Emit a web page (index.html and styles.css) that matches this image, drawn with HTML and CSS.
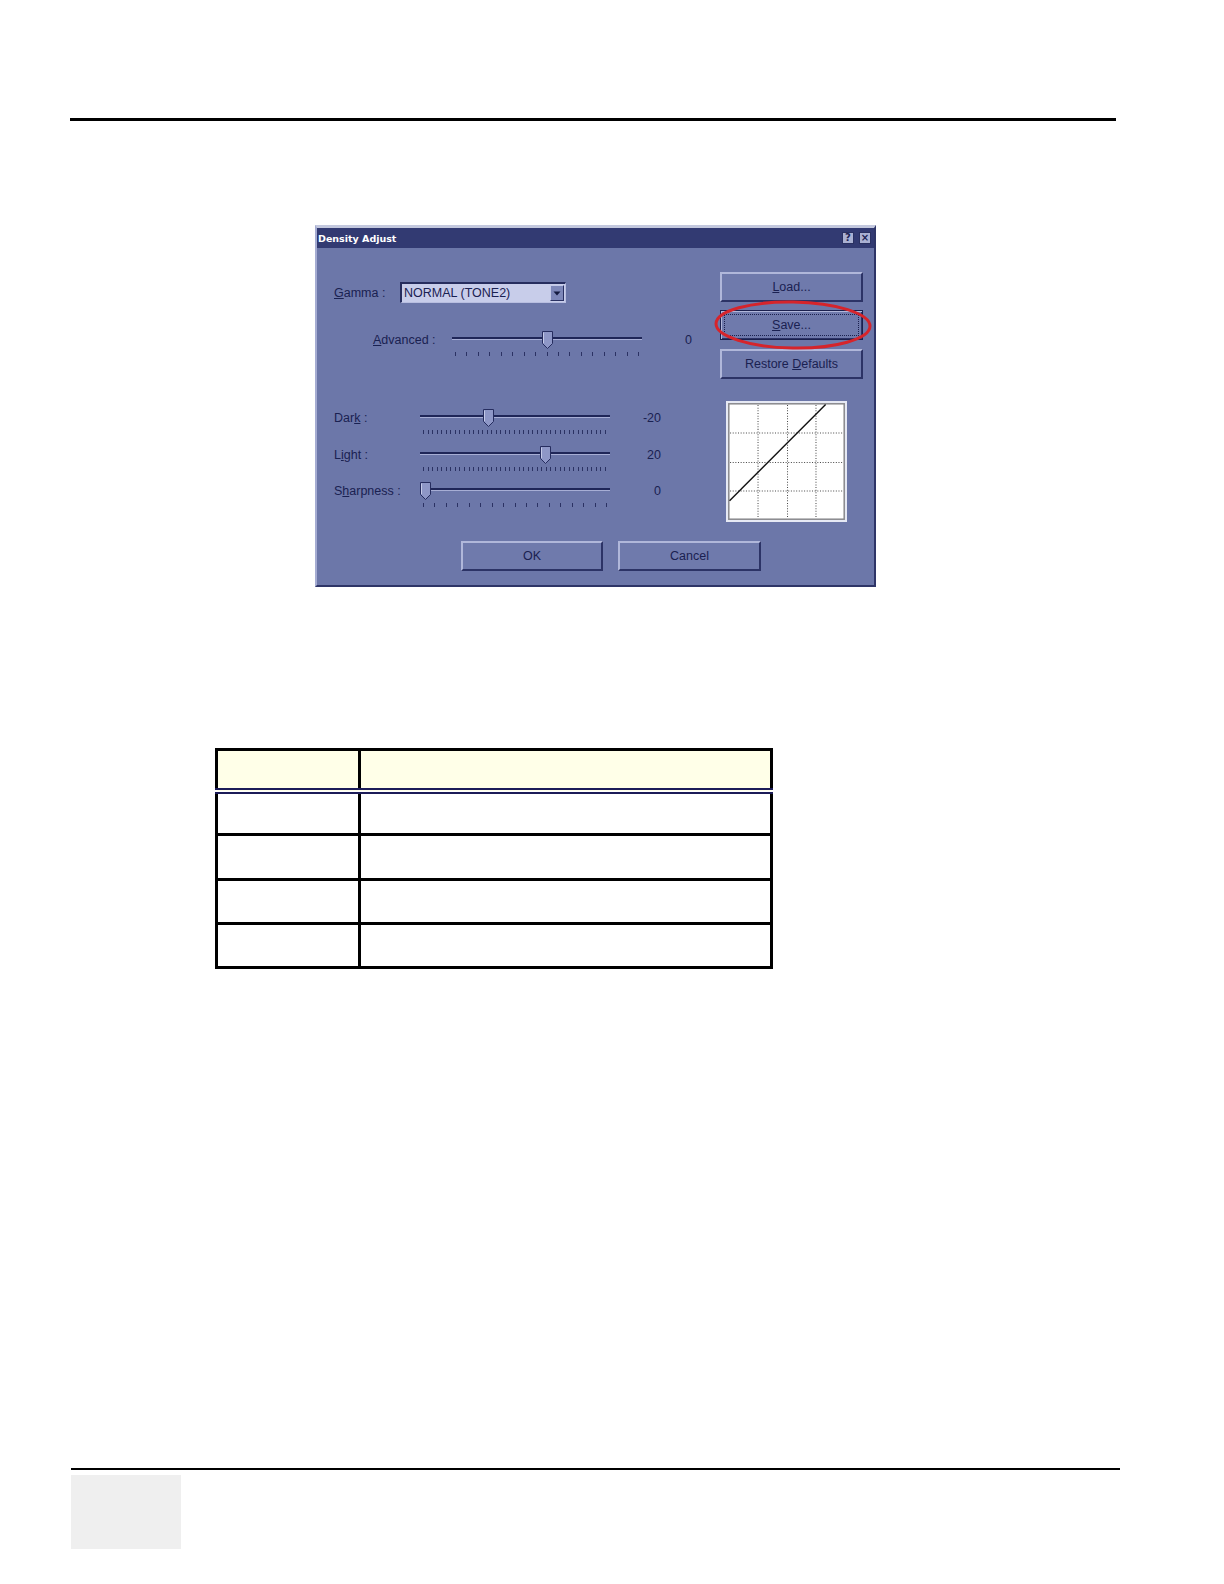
FILE: index.html
```html
<!DOCTYPE html>
<html lang="en">
<head>
<meta charset="utf-8">
<title>Density Adjust</title>
<link rel="stylesheet" href="styles.css">
</head>
<body>
<div class="page">
  <div class="rule-top"></div>

  <div class="dialog">
    <div class="titlebar">
      <span class="title">Density Adjust</span>
      <span class="tb-btns"><span class="tb-btn">?</span><span class="tb-btn">&#215;</span></span>
    </div>
    <div class="dlg-body">
      <div class="dlg-main">
        <div class="left-col">
          <div class="gamma-row">
            <span class="lbl lbl-gamma"><u>G</u>amma :</span>
            <div class="combo">
              <span class="combo-text">NORMAL (TONE2)</span>
              <span class="combo-arrow"><svg width="8" height="5" viewBox="0 0 8 5"><path d="M0.5 0.5 H7.5 L4 4.5 Z" fill="#141a40"/></svg></span>
            </div>
          </div>

          <div class="srow srow-adv">
            <span class="lbl"><u>A</u>dvanced :</span>
            <div class="slider" style="--pos:0.5">
              <div class="track"></div>
              <div class="ticks ticks-coarse"></div>
              <svg class="thumb" viewBox="0 0 11 18"><path d="M0.5 0.5 H10.5 V12.5 L5.5 17.5 L0.5 12.5 Z" fill="#8e97c7" stroke="#262d5f"/><path d="M1.5 1.5 V12" stroke="#c5cbe9"/></svg>
            </div>
            <span class="val val-adv">0</span>
          </div>

          <div class="srow srow-dark">
            <span class="lbl">Dar<u>k</u> :</span>
            <div class="slider" style="--pos:0.35">
              <div class="track"></div>
              <div class="ticks ticks-fine"></div>
              <svg class="thumb" viewBox="0 0 11 18"><path d="M0.5 0.5 H10.5 V12.5 L5.5 17.5 L0.5 12.5 Z" fill="#8e97c7" stroke="#262d5f"/><path d="M1.5 1.5 V12" stroke="#c5cbe9"/></svg>
            </div>
            <span class="val">-20</span>
          </div>

          <div class="srow srow-light">
            <span class="lbl">L<u>i</u>ght :</span>
            <div class="slider" style="--pos:0.67">
              <div class="track"></div>
              <div class="ticks ticks-fine"></div>
              <svg class="thumb" viewBox="0 0 11 18"><path d="M0.5 0.5 H10.5 V12.5 L5.5 17.5 L0.5 12.5 Z" fill="#8e97c7" stroke="#262d5f"/><path d="M1.5 1.5 V12" stroke="#c5cbe9"/></svg>
            </div>
            <span class="val">20</span>
          </div>

          <div class="srow srow-sharp">
            <span class="lbl">S<u>h</u>arpness :</span>
            <div class="slider" style="--pos:0">
              <div class="track"></div>
              <div class="ticks ticks-coarse"></div>
              <svg class="thumb" viewBox="0 0 11 18"><path d="M0.5 0.5 H10.5 V12.5 L5.5 17.5 L0.5 12.5 Z" fill="#8e97c7" stroke="#262d5f"/><path d="M1.5 1.5 V12" stroke="#c5cbe9"/></svg>
            </div>
            <span class="val">0</span>
          </div>
        </div>

        <div class="right-col">
          <div class="btn"><span><u>L</u>oad...</span></div>
          <div class="save-wrap">
            <div class="btn btn-default"><span class="focus"><span><u>S</u>ave...</span></span></div>
            <svg class="circle" width="166" height="56" viewBox="0 0 166 56"><ellipse cx="83" cy="25" rx="77" ry="23" transform="rotate(1 83 25)" fill="none" stroke="#d6242b" stroke-width="3"/></svg>
          </div>
          <div class="btn"><span>Restore <u>D</u>efaults</span></div>
          <div class="graph">
            <svg width="121" height="121" viewBox="0 0 119 119">
              <rect x="0" y="0" width="119" height="119" fill="#e6e9f4"/>
              <rect x="2" y="2" width="115" height="115" fill="#8a8a8e"/>
              <rect x="3.5" y="3.5" width="112" height="112" fill="#ffffff"/>
              <g stroke="#4a4a4a" stroke-width="1" stroke-dasharray="1 1.6">
                <line x1="31.5" y1="4" x2="31.5" y2="115"/>
                <line x1="60.5" y1="4" x2="60.5" y2="115"/>
                <line x1="88.5" y1="4" x2="88.5" y2="115"/>
                <line x1="4" y1="31.5" x2="115" y2="31.5"/>
                <line x1="4" y1="60.5" x2="115" y2="60.5"/>
                <line x1="4" y1="88.5" x2="115" y2="88.5"/>
              </g>
              <line x1="3.5" y1="98" x2="98" y2="3.5" stroke="#111" stroke-width="1.4"/>
            </svg>
          </div>
        </div>
      </div>
      <div class="dlg-foot">
        <div class="btn btn-ok"><span>OK</span></div>
        <div class="btn btn-cancel"><span>Cancel</span></div>
      </div>
    </div>
  </div>

  <table class="spec">
    <thead>
      <tr><th class="c1"></th><th class="c2"></th></tr>
    </thead>
    <tbody>
      <tr><td></td><td></td></tr>
      <tr><td></td><td></td></tr>
      <tr><td></td><td></td></tr>
      <tr><td></td><td></td></tr>
    </tbody>
  </table>

  <div class="page-foot">
    <div class="rule-bottom"></div>
    <div class="tab-box"></div>
  </div>
</div>
</body>
</html>
```

FILE: styles.css
```css
* { box-sizing: border-box; }
html, body { margin: 0; padding: 0; background: #ffffff; }
body { font-family: "Liberation Sans", Arial, sans-serif; }

.page { width: 1224px; min-height: 1584px; padding-top: 118px; overflow: hidden; }

.rule-top { margin-left: 70px; width: 1046px; height: 3px; background: #000; }

/* ---------- dialog ---------- */
.dialog {
  margin: 104px 0 0 315px;
  width: 561px;
  background: #6c77a9;
  border-top: 3px solid #c3c8de;
  border-left: 2px solid #a5acd2;
  border-right: 2px solid #2e3567;
  border-bottom: 2px solid #2e3567;
  color: #1a2151;
  font-size: 12.5px;
}
.titlebar {
  height: 20px;
  background: #323a72;
  display: flex;
  align-items: center;
  justify-content: space-between;
  padding: 0 3px 0 1px;
}
.title {
  font-family: "DejaVu Sans", Verdana, sans-serif;
  font-weight: bold;
  font-size: 9.5px;
  color: #ffffff;
}
.tb-btns { display: flex; gap: 5px; }
.tb-btn {
  width: 12px; height: 12px;
  background: #aab1d3;
  border: 1px solid #2a3162;
  font-family: "DejaVu Sans", sans-serif;
  font-weight: bold;
  font-size: 10px;
  line-height: 10px;
  text-align: center;
  color: #1c2354;
}

.dlg-body { padding-bottom: 14px; }
.dlg-main { display: flex; align-items: flex-start; }

.left-col { width: 403px; padding: 34px 0 0 17px; }

.lbl { line-height: 16px; margin-top: 1px; white-space: nowrap; }
u { text-decoration: underline; text-underline-offset: 1px; }

.gamma-row { display: flex; align-items: center; height: 21px; }
.gamma-row .lbl { width: 66px; margin-top: 0; }
.combo {
  width: 166px; height: 21px;
  display: flex; align-items: stretch;
  background: #c8cdea;
  border-top: 2px solid #262d5e;
  border-left: 2px solid #262d5e;
  border-right: 1px solid #b8bee0;
  border-bottom: 1px solid #b8bee0;
}
.combo-text { flex: 1; padding-left: 2px; line-height: 18px; color: #1a2152; }
.combo-arrow {
  width: 14px;
  margin: 1px;
  background: #7d87b9;
  border-top: 1px solid #c3c9e8;
  border-left: 1px solid #c3c9e8;
  border-right: 1px solid #2a3162;
  border-bottom: 1px solid #2a3162;
  display: flex; align-items: center; justify-content: center;
}

.srow { display: flex; align-items: flex-start; }
.srow .lbl { width: 86px; }
.srow-adv { margin-top: 28px; padding-left: 39px; }
.srow-adv .lbl { width: 79px; }
.srow-dark { margin-top: 53px; }
.srow-light { margin-top: 12px; }
.srow-sharp { margin-top: 11px; }

.slider { position: relative; width: 190px; height: 25px; }
.track {
  margin-top: 6px;
  height: 3px;
  border-top: 2px solid #1f2658;
  border-bottom: 1px solid #a7aed5;
}
.ticks { margin-left: 3px; width: 185px; }
.ticks-coarse {
  margin-top: 12px; height: 4px;
  background: repeating-linear-gradient(90deg, #2b3263 0 1px, transparent 1px 11.44px);
}
.ticks-fine {
  margin-top: 12px; height: 4px;
  background: repeating-linear-gradient(90deg, #2b3263 0 1px, transparent 1px 4.55px);
}
.thumb {
  position: absolute;
  top: 0;
  left: calc(var(--pos) * (100% - 11px));
  width: 11px; height: 18px;
}
.val { width: 51px; text-align: right; line-height: 16px; margin-top: 1px; }
.val-adv { width: 50px; }

/* right column */
.right-col { width: 143px; padding-top: 24px; }
.btn {
  height: 30px;
  display: flex; align-items: center; justify-content: center;
  background: #6f7aac;
  border: 2px solid;
  border-color: #b0b7da #2c3366 #2c3366 #b0b7da;
  color: #1a2151;
  white-space: nowrap;
}
.save-wrap { position: relative; margin-top: 8px; }
.btn-default {
  border: 1px solid #1a204e;
  box-shadow: inset 1px 1px 0 #b0b7da, inset -1px -1px 0 #2c3366;
  padding: 3px;
}
.focus {
  flex: 1; align-self: stretch;
  border: 1px dotted #1a204e;
  display: flex; align-items: center; justify-content: center;
}
.circle { position: absolute; left: -10px; top: -10px; }
.save-wrap + .btn { margin-top: 9px; }
.graph { margin: 22px 0 0 6px; width: 121px; height: 121px; }
.graph svg { display: block; }

.dlg-foot { display: flex; gap: 15px; margin-top: 19px; padding-left: 144px; }
.btn-ok { width: 142px; height: 30px; }
.btn-cancel { width: 143px; height: 30px; }

/* ---------- table ---------- */
.spec {
  margin: 161px 0 0 215px;
  width: 558px;
  border-collapse: collapse;
}
.spec th, .spec td { border: 3px solid #000; padding: 0; }
.spec th { background: #ffffe8; height: 41px; border-bottom: 6px double #1c1c58; }
.spec .c1 { width: 143px; }
.spec td { height: 44.3px; background: #fff; }

/* ---------- page foot ---------- */
.page-foot { margin-top: 499px; }
.rule-bottom { margin-left: 71px; width: 1049px; height: 2px; background: #000; }
.tab-box { margin: 5px 0 0 71px; width: 110px; height: 74px; background: #efefef; }
```
